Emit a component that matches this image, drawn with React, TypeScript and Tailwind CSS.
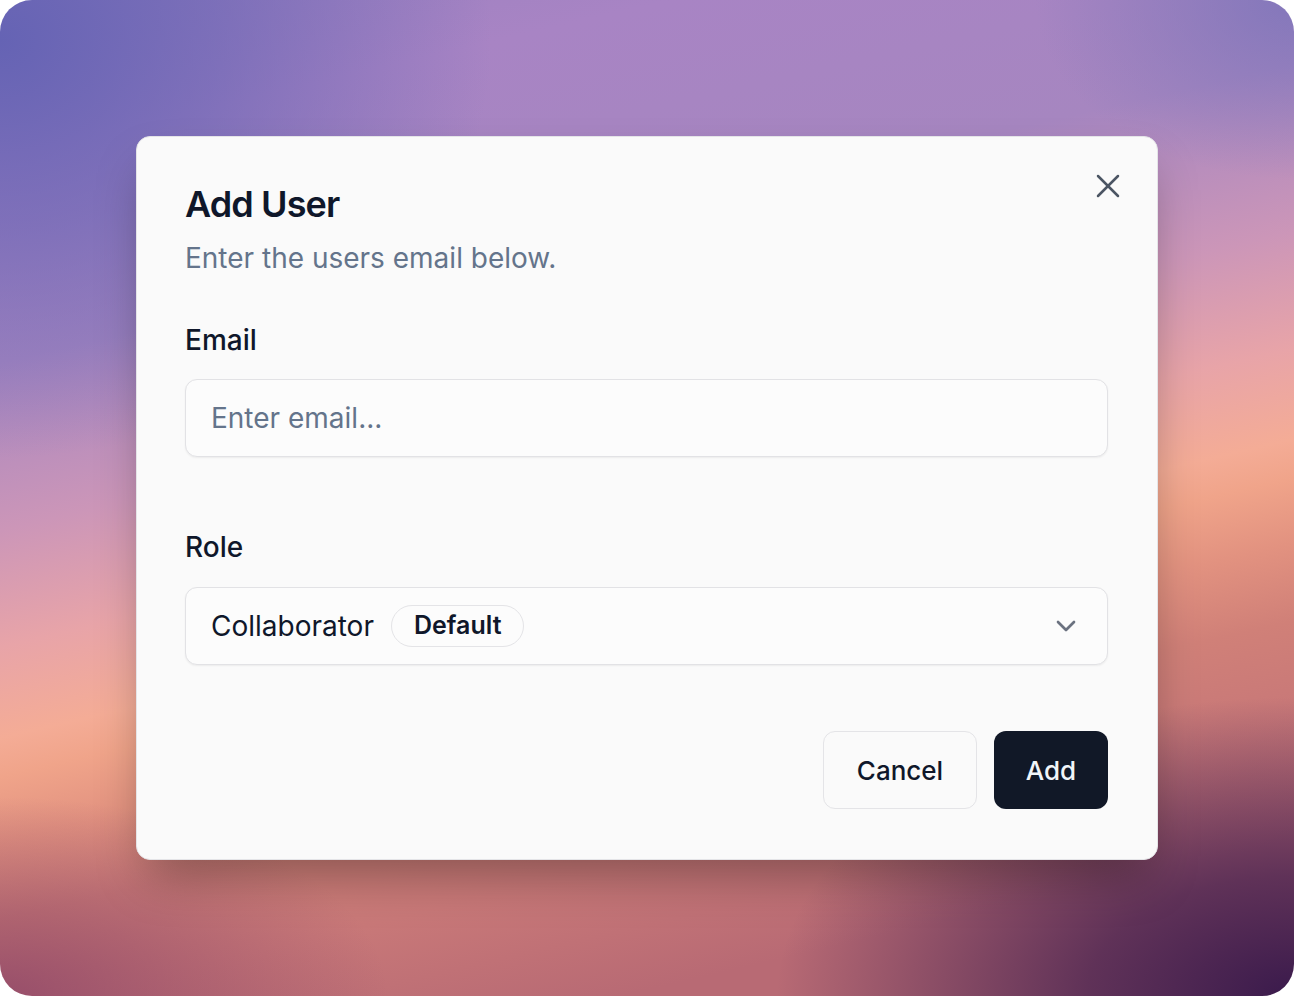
import React from "react";
import { X, ChevronDown } from "lucide-react";

export default function App() {
  return (
    <div className="w-[1294px] h-[996px] bg-white" style={{ fontFamily: "Inter, 'Noto Sans', sans-serif" }}>
      <div className="w-[1294px] h-[996px] rounded-[32px] overflow-hidden pl-[136px] pt-[136px] [background-image:radial-gradient(ellipse_40%_30%_at_100%_100%,#3a1a4c_0%,rgba(58,26,76,0.7)_40%,rgba(58,26,76,0)_100%),radial-gradient(ellipse_30%_20%_at_0%_100%,rgba(130,60,100,0.7)_0%,rgba(130,60,100,0)_100%),radial-gradient(ellipse_38%_42%_at_0%_4%,#6563b4_0%,rgba(101,99,180,0.6)_45%,rgba(101,99,180,0)_100%),radial-gradient(ellipse_20%_18%_at_100%_0%,rgba(128,118,186,0.9)_0%,rgba(128,118,186,0)_100%),linear-gradient(167deg,#9a80c0_0%,#a884c4_12%,#a686c0_28%,#cc96b8_41%,#e8a4a8_50%,#f4ac96_57%,#f0a48a_60%,#e29280_65%,#d08078_71%,#c87878_78%,#b86a74_88%)]">
        <div className="relative w-[1022px] h-[724px] rounded-[14px] bg-[#fafafa] border border-[#e4e4e7] shadow-[0_25px_50px_-12px_rgba(0,0,0,0.35)] pl-[48px] pr-[49px] pt-[49px] flex flex-col">
          <button className="absolute top-[29px] right-[29px] w-[40px] h-[40px] flex items-center justify-center text-[#4b5563]">
            <X size={40} strokeWidth={1.5} />
          </button>
          <h2 className="text-[36px] leading-none font-semibold tracking-tight text-[#0f172a]">Add User</h2>
          <p className="mt-[16px] text-[28px] leading-[40px] text-[#64748b]">Enter the users email below.</p>

          <label className="mt-[42px] text-[28px] leading-[40px] font-medium text-[#0f172a]">Email</label>
          <div className="mt-[19px] h-[78px] rounded-[12px] border border-[#e2e2e5] bg-[#fcfcfc] shadow-[0_1px_2px_rgba(0,0,0,0.06)] flex items-center px-[25px]">
            <span className="text-[28px] text-[#64748b]">Enter email...</span>
          </div>

          <label className="mt-[70px] text-[28px] leading-[40px] font-medium text-[#0f172a]">Role</label>
          <div className="mt-[20px] h-[78px] rounded-[12px] border border-[#e2e2e5] bg-[#fcfcfc] shadow-[0_1px_2px_rgba(0,0,0,0.06)] flex items-center pl-[25px] pr-[25px]">
            <span className="text-[28px] text-[#0f172a]">Collaborator</span>
            <span className="ml-[17px] h-[42px] px-[22px] rounded-full border border-[#e4e4e7] flex items-center text-[25px] font-semibold text-[#0f172a]">Default</span>
            <div className="flex-1" />
            <ChevronDown size={32} strokeWidth={2} className="text-[#6b7280]" />
          </div>

          <div className="mt-[66px] flex justify-end gap-[17px]">
            <button className="w-[154px] h-[78px] rounded-[12px] border border-[#e4e4e7] bg-[#fafafa] text-[26px] font-medium text-[#0f172a]">Cancel</button>
            <button className="w-[114px] h-[78px] rounded-[12px] bg-[#111827] text-[26px] font-medium text-[#f1f5f9]">Add</button>
          </div>
        </div>
      </div>
    </div>
  );
}
